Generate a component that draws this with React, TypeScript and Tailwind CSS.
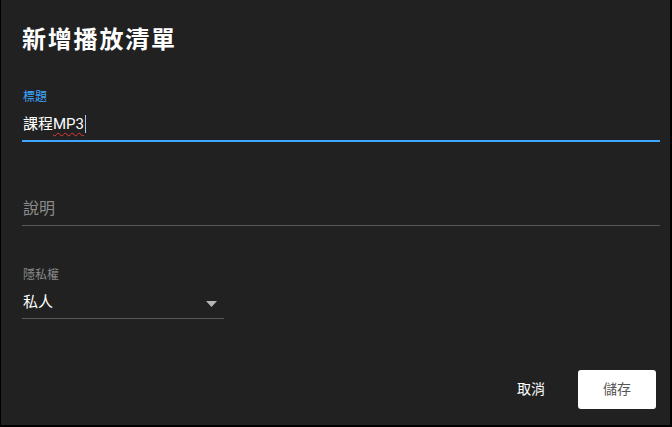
const font = "font-['Roboto','Noto_Sans_CJK_TC',sans-serif]";

export default function App() {
  return (
    <div
      className={`${font} w-[672px] h-[427px] bg-[#212121] border-l border-r-2 border-b-2 border-black flex flex-col pl-[21px] pr-[10px] pt-[24px] pb-[16px] text-white`}
    >
      <h1 className="h-8 leading-8 text-[24px] font-bold tracking-[1.8px]">新增播放清單</h1>

      {/* title field, focused */}
      <div className="mt-[33px] flex flex-col">
        <label className="h-4 leading-4 text-[12px] text-[#3ea6ff] pl-px">標題</label>
        <div className="mt-[7px] pb-[4px] border-b-2 border-[#3ea6ff] flex items-center h-[30px]">
          <span className="h-6 leading-6 text-[15px] pl-px">
            課程
            <span className="underline decoration-wavy decoration-[#e53935] decoration-1 underline-offset-[3px]">MP3</span>
          </span>
          <span className="w-px h-[18px] bg-[#9ecbff] ml-px" />
        </div>
      </div>

      {/* description */}
      <div className="mt-[54px] pb-[4px] border-b border-[#585858]">
        <div className="mt-px h-6 leading-6 text-[16px] text-[#8c8c8c] pl-px">說明</div>
      </div>

      {/* privacy select */}
      <div className="mt-[41px] flex flex-col w-[202px]">
        <label className="h-4 leading-4 text-[12px] text-[#8a8a8a] pl-px">隱私權</label>
        <div className="mt-[7px] pb-[4px] border-b border-[#585858] flex items-center justify-between">
          <span className="h-6 leading-6 text-[15px] pl-px">私人</span>
          <svg width="11" height="6" viewBox="0 0 11 6" className="mr-[7px] mt-[4px]">
            <polygon points="0,0 11,0 5.5,6" fill="#b5b5b5" />
          </svg>
        </div>
      </div>

      <div className="mt-auto flex justify-end items-center gap-[17px] pr-[4px]">
        <button className="h-[39px] px-4 text-[14px] text-white">取消</button>
        <button className="h-[39px] w-[78px] rounded-[3px] bg-white text-[14px] text-[#555]">儲存</button>
      </div>
    </div>
  );
}
